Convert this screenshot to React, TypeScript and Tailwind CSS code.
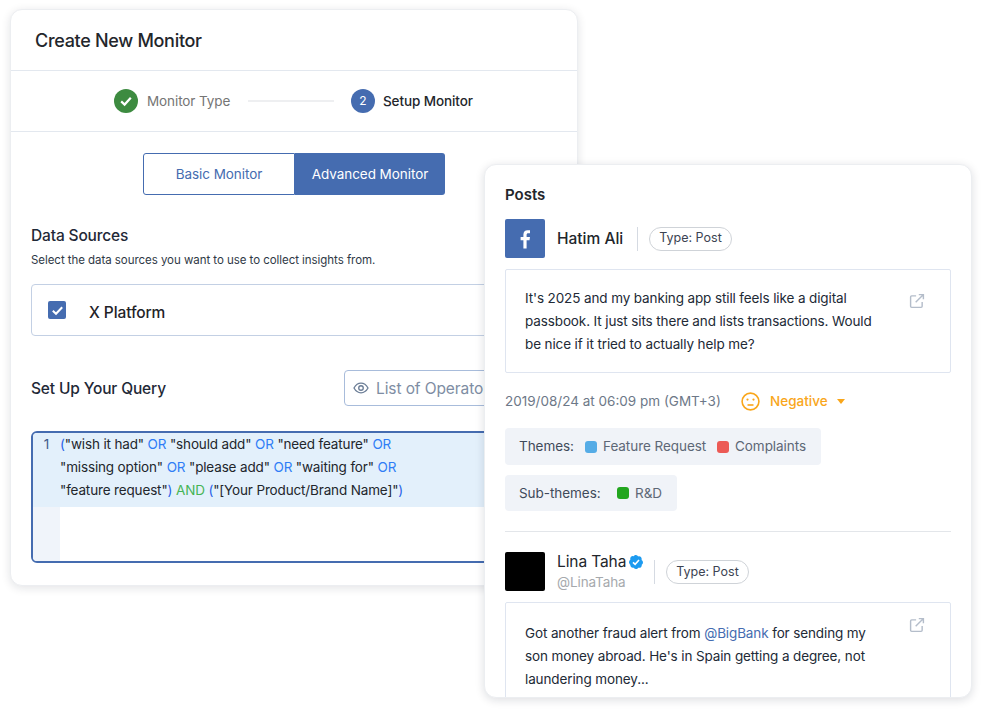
const FONT = "font-['Inter','Noto_Sans',sans-serif]";

function Ext() {
  return (
    <svg width="16" height="16" viewBox="0 0 18 18" fill="none" stroke="#b4bdca" strokeWidth="1.6" className="shrink-0">
      <path d="M8 3.2H3a1.2 1.2 0 0 0-1.2 1.2V15A1.2 1.2 0 0 0 3 16.2h10.6a1.2 1.2 0 0 0 1.2-1.2V10" />
      <path d="M11 1.8h5.2V7M16 2 7.5 10.5" />
    </svg>
  );
}

function Pill() {
  return (
    <span className="h-[24px] w-[83px] flex items-center justify-center rounded-full border border-[#cfd3d8] text-[12.5px] text-[#3c4452]">
      Type: Post
    </span>
  );
}

function K({ c, children }: { c: string; children: React.ReactNode }) {
  return <span className={c}>{children}</span>;
}

function Swatch({ c }: { c: string }) {
  return <span className={`w-[12px] h-[12px] rounded-[3px] ${c}`} />;
}

export default function App() {
  return (
    <div className={`relative w-[981px] h-[710px] overflow-hidden bg-white pl-[10px] pt-[9px] ${FONT}`}>
      <div className="w-[568px] h-[577px] rounded-[12px] border border-[#eceef1] bg-white shadow-[0_2px_10px_rgba(15,23,42,0.12)] overflow-hidden">
        <div className="h-[61px] border-b border-[#e3e8ef] flex items-center pl-[24px] text-[18px] tracking-[-0.3px] font-medium text-[#23262b]">
          Create New Monitor
        </div>
        <div className="h-[61px] border-b border-[#e3e8ef] flex items-center pl-[103px]">
          <span className="w-[24px] h-[24px] rounded-full bg-[#3d8b40] flex items-center justify-center">
            <svg width="14" height="14" viewBox="0 0 14 14" fill="none" stroke="white" strokeWidth="2.2"><path d="M2.2 7.4 5.6 10.6 11.8 3.8" /></svg>
          </span>
          <span className="ml-[9px] w-[84px] text-[13.5px] tracking-[-0.1px] text-[#757575] whitespace-nowrap">Monitor Type</span>
          <span className="ml-[17px] w-[86px] h-[2px] bg-[#eeeff1]" />
          <span className="ml-[17px] w-[24px] h-[24px] rounded-full bg-[#456cb0] flex items-center justify-center text-[12px] text-white">2</span>
          <span className="ml-[8px] text-[13.5px] tracking-[-0.1px] text-[#23262b] font-[450] whitespace-nowrap">Setup Monitor</span>
        </div>
        <div className="px-[20px]">
          <div className="flex mt-[21px] ml-[112px] h-[42px] text-[13.5px] tracking-[-0.05px]">
            <div className="w-[152px] border border-[#456cb0] rounded-l-[3px] flex items-center justify-center text-[#456cb0]">Basic Monitor</div>
            <div className="w-[150px] bg-[#456cb0] rounded-r-[3px] flex items-center justify-center text-white">Advanced Monitor</div>
          </div>
          <div className="mt-[30px] text-[15.5px] tracking-[-0.15px] leading-[22px] font-[450] text-[#1f2937]">Data Sources</div>
          <div className="mt-[4px] text-[11.5px] tracking-[-0.05px] leading-[18px] text-[#2f3946]">Select the data sources you want to use to collect insights from.</div>
          <div className="mt-[15px] h-[52px] w-[526px] rounded-[4px] border border-[#c3d0e4] flex items-center pl-[16px]">
            <span className="w-[18px] h-[18px] rounded-[2px] bg-[#456cb0] flex items-center justify-center">
              <svg width="13" height="13" viewBox="0 0 13 13" fill="none" stroke="white" strokeWidth="2"><path d="M1.8 6.8 5 9.8 11.2 3.2" /></svg>
            </span>
            <span className="ml-[23px] pt-[6px] text-[15.5px] tracking-[-0.1px] font-[450] text-[#1f2328]">X Platform</span>
          </div>
          <div className="mt-[34px] w-[526px] h-[36px] flex items-center justify-between">
            <span className="pt-[2px] text-[15.5px] tracking-[-0.15px] font-[450] text-[#1f2937]">Set Up Your Query</span>
            <div className="w-[213px] h-[36px] rounded-[4px] border border-[#a8bcdb] flex items-center pl-[8px] text-[15.5px] tracking-[-0.1px] text-[#7e8da3] whitespace-nowrap">
              <svg width="16" height="16" viewBox="0 0 24 24" fill="none" stroke="#6b7d96" strokeWidth="2"><path d="M1.5 12S5.5 4.8 12 4.8 22.5 12 22.5 12 18.5 19.2 12 19.2 1.5 12 1.5 12Z" /><circle cx="12" cy="12" r="3.4" /></svg>
              <span className="ml-[7px] pt-[1px]">List of Operators</span>
            </div>
          </div>
          <div className="mt-[25px] w-[526px] h-[132px] rounded-[6px] border-2 border-[#456cb0] overflow-hidden flex flex-col text-[13.5px] tracking-[-0.15px] leading-[23px] text-[#22262c]">
            <div className="h-[74px] bg-[#e3f0fb] flex">
              <div className="w-[27px] pr-[11px] text-right text-[#3e5a8a]">1</div>
              <div className="whitespace-nowrap">
                <div><K c="text-[#2962e8]">(</K>"wish it had" <K c="text-[#2f7df6]">OR</K> "should add" <K c="text-[#2f7df6]">OR</K> "need feature" <K c="text-[#2f7df6]">OR</K></div>
                <div>"missing option" <K c="text-[#2f7df6]">OR</K> "please add" <K c="text-[#2f7df6]">OR</K> "waiting for" <K c="text-[#2f7df6]">OR</K></div>
                <div>"feature request"<K c="text-[#2962e8]">)</K> <K c="text-[#46b455]">AND</K> <K c="text-[#2962e8]">(</K>"[Your Product/Brand Name]"<K c="text-[#2962e8]">)</K></div>
              </div>
            </div>
            <div className="flex-1 flex">
              <div className="w-[27px] bg-[#f0f4fa]" />
            </div>
          </div>
        </div>
      </div>

      <div className="absolute left-[484px] top-[164px] w-[488px] h-[534px] rounded-[12px] border border-[#eceef1] bg-white shadow-[0_2px_10px_rgba(15,23,42,0.14)] overflow-hidden px-[20px]">
        <div className="mt-[21px] h-[18px] leading-[18px] text-[15px] font-semibold text-[#23262b]">Posts</div>
        <div className="mt-[15px] flex items-center h-[39px]">
          <span className="w-[40px] h-[39px] rounded-[2px] bg-[#456cb0] flex items-center justify-center">
            <svg width="20" height="22" viewBox="0 0 20 22" fill="white"><path d="M11.6 20.5v-8.3h2.9l.5-3.3h-3.4V6.9c0-1 .4-1.6 1.7-1.6H15V2.3c-.4 0-1.4-.1-2.4-.1-2.5 0-4.2 1.5-4.2 4.2v2.5H5.6v3.3h2.8v8.3Z" /></svg>
          </span>
          <span className="ml-[12px] w-[80px] text-[15.5px] font-medium text-[#22262c]">Hatim Ali</span>
          <span className="w-px h-[24px] bg-[#d5dae2]" />
          <span className="ml-[11px]"><Pill /></span>
        </div>
        <div className="mt-[11px] w-[446px] h-[104px] rounded-[2px] border border-[#dfe5f0] flex pl-[19px] pr-[25px] pt-[17px]">
          <p className="w-[355px] text-[13.5px] tracking-[-0.12px] leading-[23px] text-[#222a36]">It's 2025 and my banking app still feels like a digital passbook. It just sits there and lists transactions. Would be nice if it tried to actually help me?</p>
          <span className="ml-auto mt-[6px]"><Ext /></span>
        </div>
        <div className="mt-[18px] h-[20px] flex items-center text-[13.5px]">
          <span className="w-[236px] text-[#6d7888] whitespace-nowrap">2019/08/24 at 06:09 pm (GMT+3)</span>
          <svg width="19" height="19" viewBox="0 0 19 19" fill="none" stroke="#f9a61a" strokeWidth="1.6" className="shrink-0">
            <circle cx="9.5" cy="9.5" r="8.4" />
            <circle cx="6.5" cy="7.6" r="1.1" fill="#f9a61a" stroke="none" />
            <circle cx="12.5" cy="7.6" r="1.1" fill="#f9a61a" stroke="none" />
            <path d="M6.5 13h6" />
          </svg>
          <span className="ml-[10px] w-[67px] font-[450] text-[#f9a61a]">Negative</span>
          <svg width="8" height="5" viewBox="0 0 8 5" fill="#f9a61a"><path d="M0 0h8L4 5Z" /></svg>
        </div>
        <div className="mt-[17px] w-[316px] h-[37px] rounded-[4px] bg-[#f0f3f8] flex items-center pl-[14px] text-[13.5px] tracking-[-0.05px] text-[#5d6776] whitespace-nowrap">
          <span className="w-[66px] text-[#3f4a5a]">Themes:</span>
          <Swatch c="bg-[#55ace6]" />
          <span className="ml-[6px] w-[114px]">Feature Request</span>
          <Swatch c="bg-[#ec5a55]" />
          <span className="ml-[6px]">Complaints</span>
        </div>
        <div className="mt-[10px] w-[172px] h-[36px] rounded-[4px] bg-[#f0f3f8] flex items-center pl-[14px] text-[13.5px] tracking-[-0.05px] text-[#5d6776] whitespace-nowrap">
          <span className="w-[98px] pt-[1px] text-[#3f4a5a]">Sub-themes:</span>
          <Swatch c="bg-[#22a61f]" />
          <span className="ml-[6px] pt-[1px]">R&amp;D</span>
        </div>
        <div className="mt-[20px] h-px w-[446px] bg-[#e3e6ea]" />
        <div className="mt-[20px] flex h-[39px] items-center">
          <span className="w-[40px] h-[39px] rounded-[2px] bg-black" />
          <div className="ml-[12px] w-[97px]">
            <div className="flex items-center h-[20px] text-[15.5px] tracking-[-0.1px] text-[#22262c]">
              Lina Taha
              <svg width="16" height="16" viewBox="0 0 24 24" className="ml-[2px] shrink-0">
                <path fill="#1d9bf0" d="M22.5 12.5c0-1.58-.88-2.95-2.16-3.66.15-.44.23-.91.23-1.4 0-2.26-1.75-4.1-3.91-4.1-.48 0-.94.09-1.36.26A4.07 4.07 0 0 0 12 1.5c-1.44 0-2.7.76-3.41 1.9a3.8 3.8 0 0 0-1.36-.26c-2.16 0-3.91 1.84-3.91 4.1 0 .49.08.96.23 1.4A4.17 4.17 0 0 0 1.5 12.5c0 1.5.79 2.8 1.97 3.52a4.3 4.3 0 0 0-.04.58c0 2.26 1.75 4.1 3.91 4.1.48 0 .94-.09 1.36-.26A4.07 4.07 0 0 0 12 22.5c1.44 0 2.7-.76 3.41-1.96.42.17.88.26 1.36.26 2.16 0 3.91-1.84 3.91-4.1 0-.2-.01-.39-.04-.58a4.13 4.13 0 0 0 1.86-3.62Z" />
                <path fill="none" stroke="white" strokeWidth="2.4" d="m7.5 12.5 3.2 3.1 5.8-6.6" />
              </svg>
            </div>
            <div className="h-[20px] text-[13.5px] tracking-[-0.1px] text-[#a6a9ad]">@LinaTaha</div>
          </div>
          <span className="w-px h-[24px] bg-[#d5dae2]" />
          <span className="ml-[11px] mt-[1px]"><Pill /></span>
        </div>
        <div className="mt-[11px] w-[446px] h-[104px] rounded-[2px] border border-[#dfe5f0] flex pl-[19px] pr-[25px] pt-[19px]">
          <p className="w-[355px] text-[13.5px] tracking-[-0.12px] leading-[23px] text-[#222a36]">Got another fraud alert from <span className="text-[#456cb0]">@BigBank</span> for sending my son money abroad. He's in Spain getting a degree, not laundering money...</p>
          <span className="ml-auto -mt-[5px]"><Ext /></span>
        </div>
      </div>
    </div>
  );
}
